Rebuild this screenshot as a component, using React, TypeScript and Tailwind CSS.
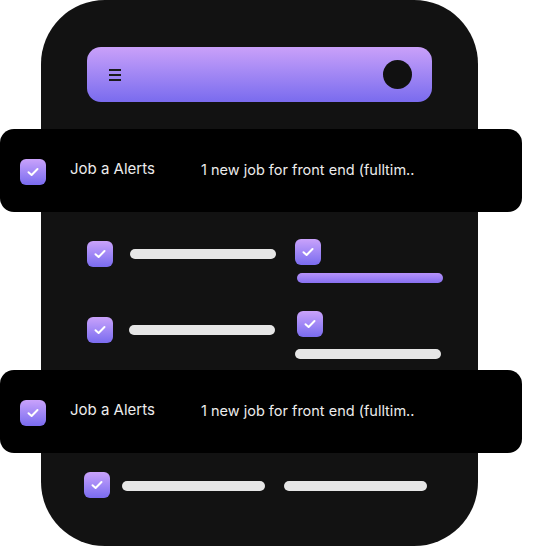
const Check = ({ className = "" }: { className?: string }) => (
    <div
        className={`w-[26px] h-[26px] shrink-0 rounded-[6px] bg-gradient-to-b from-[#caa2fb] to-[#7a6bef] flex items-center justify-center ${className}`}
    >
        <svg width="12" height="10" viewBox="0 0 12 10" fill="none">
            <path d="M1.5 5.2 L4.6 8 L10.5 2" stroke="white" strokeWidth="2" strokeLinecap="round" strokeLinejoin="round" />
        </svg>
    </div>
);

const Bar = ({ className = "" }: { className?: string }) => (
    <div className={`h-[10px] rounded-full bg-[#e6e6e6] ${className}`} />
);

const AlertCard = ({ className = "" }: { className?: string }) => (
    <div
        className={`ml-[-41px] w-[522px] h-[83px] rounded-[14px] bg-black flex items-center pl-[20px] ${className}`}
    >
        <Check className="mt-[2px]" />
        <span className="ml-[24px] w-[131px] text-[15px] text-[#ececec] mb-[2px]">Job a Alerts</span>
        <span className="text-[14.5px] text-[#ececec] mb-[2px]">1 new job for front end (fulltim..</span>
    </div>
);

const App = () => {
    return (
        <div className="w-[535px] h-[546px] bg-white overflow-hidden" style={{ fontFamily: "Inter, 'Noto Sans', sans-serif" }}>
            <div className="ml-[41px] w-[437px] h-[546px] rounded-[64px] bg-[#121212] flex flex-col pt-[47px]">
                {/* Header */}
                <div className="ml-[46px] w-[345px] h-[55px] rounded-[14px] bg-gradient-to-b from-[#caa0f9] to-[#7a6bee] flex items-center justify-between pl-[22px] pr-[20px]">
                    <div className="flex flex-col gap-[3px]">
                        <div className="w-[12px] h-[2px] bg-[#1a1a1a]" />
                        <div className="w-[12px] h-[2px] bg-[#1a1a1a]" />
                        <div className="w-[12px] h-[2px] bg-[#1a1a1a]" />
                    </div>
                    <div className="w-[29px] h-[29px] rounded-full bg-[#111111]" />
                </div>

                <AlertCard className="mt-[27px]" />

                {/* Row 1 */}
                <div className="mt-[27px] flex items-start pl-[46px]">
                    <div className="flex items-center gap-[17px] mt-[2px]">
                        <Check />
                        <Bar className="w-[146px]" />
                    </div>
                    <div className="ml-[19px] flex flex-col">
                        <Check />
                        <div className="mt-[8px] ml-[2px] w-[146px] h-[10px] rounded-full bg-gradient-to-b from-[#b792fa] to-[#8770f0]" />
                    </div>
                </div>

                {/* Row 2 */}
                <div className="mt-[28px] flex items-start pl-[46px]">
                    <div className="flex items-center gap-[16px] mt-[6px]">
                        <Check />
                        <Bar className="w-[146px]" />
                    </div>
                    <div className="ml-[20px] flex flex-col">
                        <Check className="ml-[2px]" />
                        <Bar className="mt-[12px] w-[146px]" />
                    </div>
                </div>

                <AlertCard className="mt-[11px]" />

                {/* Row 3 */}
                <div className="mt-[19px] flex items-center pl-[43px]">
                    <Check />
                    <Bar className="ml-[12px] w-[143px] mt-[1px]" />
                    <Bar className="ml-[19px] w-[143px] mt-[1px]" />
                </div>
            </div>
        </div>
    );
};

export default App;
